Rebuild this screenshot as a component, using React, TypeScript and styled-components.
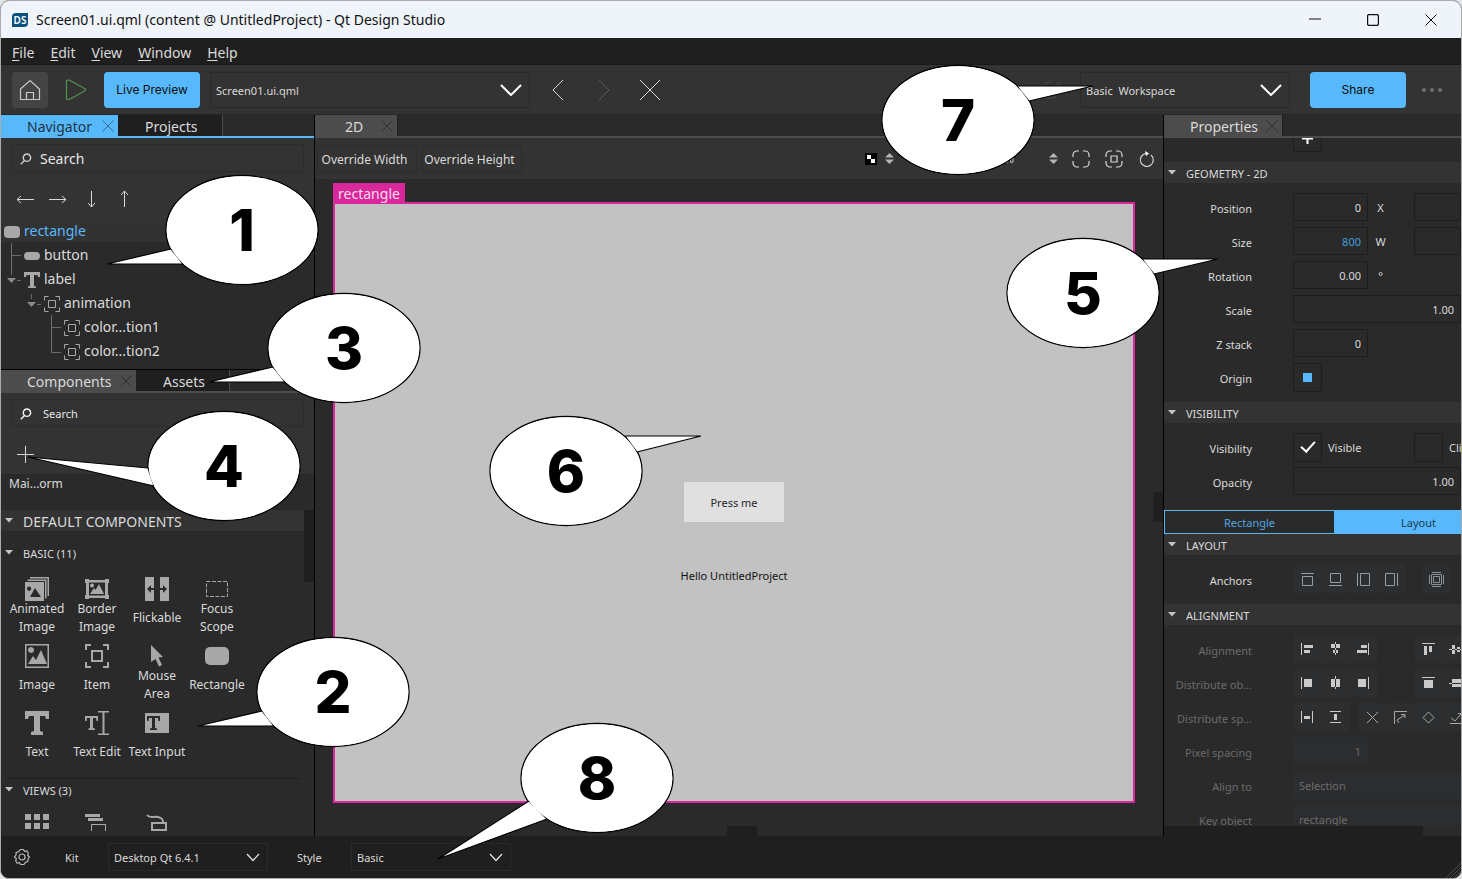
import React from "react";
import styled, { createGlobalStyle, css } from "styled-components";

const c = {
  dark: "#1f1f1f",
  panel: "#2a2a2a",
  bar: "#333333",
  tab: "#4c4c4c",
  line: "#1f1f1f",
  text: "#dadada",
  blue: "#57b9fc",
  icon: "#a8a8a8",
  pink: "#d8289c",
};

const Global = createGlobalStyle`
  * { box-sizing: border-box; }
  body { margin: 0; background: #e4e4e4; font-family: "Noto Sans", "Open Sans", sans-serif; color: ${c.text}; }
  button, input, select { font: inherit; color: inherit; margin: 0; padding: 0; border: 0; background: none; border-radius: 0; outline: 0; }
`;

const Shell = styled.div`
  position: relative;
  display: flex;
  flex-direction: column;
  height: 100vh;
  border: 1px solid #a9abad;
  border-radius: 9px;
  overflow: hidden;
  background: ${c.panel};
  font-size: 11px;
`;

/* ---------- title, menu ---------- */
const TitleBar = styled.header`
  display: flex;
  align-items: center;
  flex: 0 0 37px;
  padding: 0 1px 0 11px;
  background: #eff4fa;
  color: #111;
  font-size: 14px;
`;
const Logo = styled.span`
  width: 16px;
  height: 14px;
  margin-right: 8px;
  border-radius: 4px 0 4px 0;
  background: #0b4f80;
  color: #fff;
  font-size: 10px;
  font-weight: 600;
  line-height: 14px;
  text-align: center;
`;
const WindowButtons = styled.div`
  display: flex;
  margin-left: auto;
`;
const WindowButton = styled.button`
  display: grid;
  place-items: center;
  width: 58px;
  height: 36px;
`;
const MenuBar = styled.nav`
  display: flex;
  align-items: center;
  gap: 16px;
  flex: 0 0 27px;
  padding: 3px 12px 0 11px;
  background: ${c.dark};
  border-bottom: 1px solid #191919;
  font-size: 14px;
`;
const MenuButton = styled.button`
  line-height: 20px;
  &::first-letter { text-decoration: underline; text-underline-offset: 2px; }
`;

/* ---------- main toolbar ---------- */
const Toolbar = styled.div`
  display: flex;
  align-items: center;
  flex: 0 0 50px;
  padding: 0 16px 0 11px;
  background: ${c.bar};
  border-bottom: 1px solid #262626;
`;
const ToolButton = styled.button<{ $filled?: boolean; $w?: number }>`
  display: grid;
  place-items: center;
  width: ${(p) => p.$w ?? 36}px;
  height: 36px;
  border-radius: 4px;
  background: ${(p) => (p.$filled ? "#444444" : "none")};
`;
const PrimaryButton = styled.button`
  width: 96px;
  height: 36px;
  border-radius: 4px;
  background: ${c.blue};
  color: #0c0c0c;
  font-family: Inter, sans-serif;
  font-size: 12px;
  font-weight: 400;
`;
const SelectBox = styled.span<{ $w: number; $h: number }>`
  position: relative;
  display: flex;
  align-items: center;
  width: ${(p) => p.$w}px;
  height: ${(p) => p.$h}px;
  border: 1px solid #2a2a2a;
  select {
    width: 100%;
    height: 100%;
    padding: 1px 0 0 5px;
    appearance: none;
    white-space: pre;
  }
  svg { position: absolute; right: 7px; pointer-events: none; }
`;
const Spacer = styled.span<{ $w?: number }>`
  ${(p) => (p.$w ? css`width: ${p.$w}px;` : css`flex: 1;`)}
`;

/* ---------- docks ---------- */
const Body = styled.div`
  display: flex;
  flex: 1;
  min-height: 0;
`;
const SideDock = styled.aside<{ $w: number }>`
  display: flex;
  flex-direction: column;
  flex: 0 0 ${(p) => p.$w}px;
  min-width: 0;
  overflow: hidden;
`;
const CenterDock = styled.main`
  display: flex;
  flex-direction: column;
  flex: 1;
  min-width: 0;
  border-left: 1px solid #000;
  border-right: 1px solid #000;
`;
const TabStrip = styled.div<{ $accent?: boolean }>`
  display: flex;
  flex: 0 0 23px;
  border-bottom: 2px solid ${(p) => (p.$accent ? c.blue : c.tab)};
`;
const TabItem = styled.div<{ $kind: "accent" | "active" | "idle"; $w: number; $pad: number }>`
  display: flex;
  align-items: center;
  width: ${(p) => p.$w}px;
  padding: 0 4px 0 ${(p) => p.$pad}px;
  border-right: 1px solid ${(p) => (p.$kind === "idle" ? c.tab : c.dark)};
  background: ${(p) => (p.$kind === "accent" ? c.blue : p.$kind === "active" ? c.tab : c.dark)};
  color: ${(p) => (p.$kind === "accent" ? "#22313d" : c.text)};
  font-size: 14px;
`;
const TabLabel = styled.button`
  flex: 1;
  padding-top: 2px;
  text-align: left;
  white-space: nowrap;
  line-height: 18px;
`;
const TabClose = styled.button`
  display: grid;
  color: #2e2e2e;
`;
const DockHeader = styled.div<{ $h: number }>`
  flex: 0 0 ${(p) => p.$h}px;
  padding: 6px 10px 0;
  background: ${c.bar};
`;
const SearchBox = styled.label<{ $large?: boolean }>`
  display: flex;
  align-items: center;
  gap: ${(p) => (p.$large ? 8 : 11)}px;
  height: 28px;
  padding: 1px 0 0 8px;
  border: 1px solid #2c2c2c;
  border-radius: 3px;
  font-size: ${(p) => (p.$large ? 14 : 11)}px;
  input { flex: 1; min-width: 0; color: #e6e6e6; }
  input::placeholder { color: #e6e6e6; opacity: 1; }
`;
const ArrowRow = styled.div`
  display: flex;
  gap: 9px;
  padding: 15px 2px 0;
`;
const SmallButton = styled.button`
  display: grid;
  place-items: center;
  width: 24px;
  height: 24px;
`;

/* ---------- navigator tree ---------- */
const Tree = styled.ul`
  flex: 0 0 150px;
  margin: 0;
  padding: 0;
  list-style: none;
  border-bottom: 1px solid #000;
  font-size: 14px;
`;
const TreeRow = styled.li<{ $selected?: boolean; $depth: number }>`
  display: flex;
  align-items: center;
  height: 24px;
  padding-left: ${(p) => p.$depth * 20}px;
  background: ${(p) => (p.$selected ? "#323232" : "none")};
  color: ${(p) => (p.$selected ? c.blue : c.text)};
  &:first-child { height: 22px; margin-bottom: 1px; }
  svg { flex: none; }
`;
const TreeText = styled.span`
  margin-left: 1px;
  line-height: 20px;
`;

/* ---------- component library ---------- */
const Library = styled.div`
  display: flex;
  flex-direction: column;
  flex: 1;
  min-height: 0;
  overflow: hidden;
`;
const ModuleRow = styled.div`
  flex: 0 0 36px;
  padding-left: 8px;
  font-size: 12px;
  line-height: 20px;
`;
const LibraryScroll = styled.div`
  display: flex;
  flex: 1;
  min-height: 0;
`;
const LibraryList = styled.div`
  flex: 1;
  min-width: 0;
  overflow: hidden;
`;
const LibraryTrack = styled.div`
  width: 10px;
  &::before { content: ""; display: block; height: 72px; background: ${c.dark}; }
`;
const SectionTitle = styled.h2<{ $filled?: boolean; $big?: boolean; $h?: number }>`
  display: flex;
  align-items: center;
  gap: 9px;
  height: ${(p) => p.$h ?? 21}px;
  margin: 0;
  padding-left: 4px;
  background: ${(p) => (p.$filled ? c.bar : "none")};
  font-size: ${(p) => (p.$big ? 14 : 11)}px;
  font-weight: 400;
  white-space: nowrap;
  span { padding-top: 2px; }
`;
const Grid = styled.div<{ $top: number }>`
  display: grid;
  grid-template-columns: repeat(4, 60px);
  row-gap: 10px;
  padding: ${(p) => p.$top}px 6px 10px;
`;
const GridCell = styled.button`
  display: flex;
  flex-direction: column;
  align-items: center;
  font-size: 12px;
  line-height: 18px;
`;
const GridLabel = styled.span`
  display: flex;
  align-items: center;
  height: 33px;
  width: 60px;
  justify-content: center;
  span { white-space: pre; }
`;
const Rule = styled.hr`
  margin: 0 4px 0 5px;
  border: 0;
  border-top: 1px solid ${c.line};
`;

/* ---------- 2D view ---------- */
const ViewBar = styled.div`
  display: flex;
  align-items: center;
  flex: 0 0 41px;
  padding: 0 4px 0 2px;
  background: ${c.bar};
`;
const OverrideButton = styled.button`
  width: 100px;
  height: 28px;
  margin-right: 5px;
  padding: 1px 5px 0 0;
  border: 1px solid #2c2c2c;
  border-radius: 3px;
  font-size: 12px;
  white-space: nowrap;
`;
const Zoom = styled.span`
  width: 102px;
  text-align: right;
  font-size: 12px;
`;
const Stage = styled.div`
  position: relative;
  flex: 1;
  min-height: 0;
  overflow: hidden;
  padding: 4px 0 0 18px;
`;
const ArtboardName = styled.div`
  width: 72px;
  height: 19px;
  background: ${c.pink};
  color: #f4dcec;
  font-size: 14px;
  line-height: 22px;
  text-align: center;
`;
const Artboard = styled.div`
  display: flex;
  flex-direction: column;
  align-items: center;
  width: 802px;
  height: 601px;
  padding-top: 278px;
  border: 2px solid ${c.pink};
  background: #c2c2c2;
  color: #111;
`;
const PressButton = styled.button`
  width: 100px;
  height: 40px;
  margin-bottom: 46px;
  background: #e0e0e0;
  color: #26282a;
`;
const ThumbV = styled.div`
  position: absolute;
  right: 0;
  top: 313px;
  width: 10px;
  height: 30px;
  background: ${c.dark};
`;
const ThumbH = styled.div`
  position: absolute;
  left: 412px;
  bottom: 0;
  width: 30px;
  height: 10px;
  background: ${c.dark};
`;

/* ---------- properties ---------- */
const Props = styled.div`
  flex: 1;
  min-height: 0;
  overflow: hidden;
`;
const Rows = styled.div<{ $bottom: number; $top?: number }>`
  display: grid;
  grid-template-columns: minmax(0, 1fr);
  row-gap: 6px;
  padding: ${(p) => p.$top ?? 10}px 0 ${(p) => p.$bottom}px;
`;
const Row = styled.div<{ $dim?: boolean }>`
  display: flex;
  align-items: center;
  height: 28px;
  color: ${(p) => (p.$dim ? "#6b6b6b" : c.text)};
`;
const RowLabel = styled.label`
  width: 88px;
  flex: none;
  margin-right: 41px;
  padding-top: 2px;
  text-align: right;
  white-space: nowrap;
`;
const Pair = styled.div`
  display: flex;
  flex: none;
  align-items: center;
  width: 121px;
`;
const Field = styled.input<{ $fill?: boolean; $blue?: boolean; $dim?: boolean; $left?: boolean }>`
  ${(p) => (p.$fill ? css`flex: 1; min-width: 0; border-right-width: 0 !important;` : css`width: 75px; flex: none;`)}
  height: 28px;
  padding: 1px 6px 0 5px !important;
  border: 1px solid ${(p) => (p.$dim ? "#2a2d30" : "#1d1d1d")} !important;
  background: ${(p) => (p.$dim ? "#2c2d2f" : "none")} !important;
  color: ${(p) => (p.$blue ? "#3f9cd8" : "inherit")} !important;
  text-align: ${(p) => (p.$left ? "left" : "right")};
`;
const Unit = styled.span`
  width: 25px;
  padding-top: 1px;
  text-align: center;
`;
const CheckBox = styled.input`
  appearance: none;
  display: grid;
  flex: none;
  place-items: center;
  width: 29px;
  height: 29px;
  border: 1px solid #1d1d1d !important;
  &:checked::before {
    content: "";
    width: 12px;
    height: 6px;
    margin-top: -4px;
    border: solid #fff;
    border-width: 0 0 2px 2px;
    transform: rotate(-48deg);
  }
`;
const CheckLabel = styled.label`
  margin-left: 6px;
  padding-top: 1px;
  white-space: nowrap;
`;
const OriginButton = styled.button`
  display: grid;
  place-items: center;
  width: 29px;
  height: 29px;
  border: 1px solid #1d1d1d !important;
  &::before { content: ""; width: 9px; height: 9px; background: ${c.blue}; }
`;
const ClippedRow = styled.div`
  display: flex;
  align-items: flex-end;
  height: 14px;
  margin-bottom: 10px;
  padding-left: 129px;
  overflow: hidden;
`;
const AddButton = styled.button`
  display: grid;
  place-items: center;
  flex: none;
  width: 29px;
  height: 28px;
  border: 1px solid #1d1d1d !important;
`;
const Segments = styled.div`
  display: flex;
  height: 24px;
  border: 1px solid ${c.blue};
  border-right: 0;
`;
const Segment = styled.button<{ $on?: boolean }>`
  flex: none;
  width: 169px;
  background: ${(p) => (p.$on ? c.blue : "none")};
  color: ${(p) => (p.$on ? "#1d3a50" : "#4ea6e2")};
`;
const IconGroup = styled.div<{ $gap?: number }>`
  display: flex;
  flex: none;
  gap: 1px;
  margin-left: ${(p) => p.$gap ?? 1}px;
`;
const IconButton = styled.button`
  display: grid;
  flex: none;
  place-items: center;
  width: 27px;
  height: 28px;
  background: #2c2e30;
`;
const HScroll = styled.div`
  flex: 0 0 10px;
  &::before { content: ""; display: block; width: 259px; height: 10px; background: ${c.dark}; }
`;

/* ---------- status bar ---------- */
const StatusBar = styled.footer`
  display: flex;
  align-items: center;
  flex: 0 0 42px;
  padding-left: 12px;
  background: ${c.dark};
  svg { flex: none; }
`;
const StatusLabel = styled.label<{ $w: number }>`
  width: ${(p) => p.$w}px;
  padding-top: 1px;
`;
const Grip = styled.span`
  align-self: flex-end;
  margin-left: auto;
  display: flex;
`;

/* ---------- callouts ---------- */
const Bubble = styled.div<{ $x: number; $y: number }>`
  position: absolute;
  left: ${(p) => p.$x - 77}px;
  top: ${(p) => p.$y - 56}px;
  display: grid;
  place-items: center;
  width: 152px;
  height: 110px;
  pointer-events: none;
  svg { position: absolute; inset: 0; overflow: visible; }
`;
const BubbleNumber = styled.strong`
  position: relative;
  color: #000;
  font-family: Inter, sans-serif;
  font-size: 58px;
  font-weight: 800;
  line-height: 60px;
`;

type Pt = [number, number];
const callouts: { n: number; x: number; y: number; tip: Pt; a: Pt; b: Pt }[] = [
  { n: 1, x: 242, y: 230, tip: [107, 264], a: [171, 249], b: [183, 264] },
  { n: 2, x: 333, y: 692, tip: [198, 726], a: [262, 711], b: [274, 726] },
  { n: 3, x: 344, y: 348, tip: [209, 382], a: [273, 367], b: [285, 382] },
  { n: 4, x: 224, y: 466, tip: [28, 457], a: [148, 468], b: [154, 486] },
  { n: 5, x: 1083, y: 293, tip: [1218, 259], a: [1142, 259], b: [1154, 274] },
  { n: 6, x: 566, y: 471, tip: [701, 436], a: [625, 436], b: [637, 452] },
  { n: 7, x: 958, y: 120, tip: [1093, 86], a: [1017, 86], b: [1029, 101] },
  { n: 8, x: 597, y: 778, tip: [438, 859], a: [529, 801], b: [547, 819] },
];

function Callout({ n, x, y, tip, a, b }: (typeof callouts)[number]) {
  const local = ([px, py]: Pt) => `${px - x + 76},${py - y + 55}`;
  return (
    <Bubble $x={x} $y={y}>
      <svg width="152" height="110">
        <ellipse cx="76" cy="55" rx="76" ry="54.5" fill="#fff" stroke="#000" strokeWidth="1.3" />
        <polygon points={`${local(a)} ${local(tip)} ${local(b)}`} fill="#fff" stroke="#000" strokeWidth="1.2" strokeLinejoin="bevel" />
        <ellipse cx="76" cy="55" rx="75.3" ry="53.8" fill="#fff" />
      </svg>
      <BubbleNumber>{n}</BubbleNumber>
    </Bubble>
  );
}

/* ---------- icons ---------- */
function Line({ w, h = w, d, color = "#d8d8d8", sw = 1, dash }: { w: number; h?: number; d: string; color?: string; sw?: number; dash?: string }) {
  return (
    <svg width={w} height={h} viewBox={`0 0 ${w} ${h}`} fill="none" stroke={color} strokeWidth={sw} strokeDasharray={dash}>
      <path d={d} />
    </svg>
  );
}
function Solid({ w, h = w, d, color = c.icon }: { w: number; h?: number; d: string; color?: string }) {
  return (
    <svg width={w} height={h} viewBox={`0 0 ${w} ${h}`} fill={color} fillRule="evenodd">
      <path d={d} />
    </svg>
  );
}
const Triangle = () => <Solid w={9} h={5} d="M0 0H8L4 4.500Z" color="#c4c4c4" />;
const Chevron = () => <Line w={22} h={12} d="M1 1L11 11L21 1" color="#fff" sw={2} />;
const ChevronSmall = () => <Line w={14} h={9} d="M1 1L7 7.500L13 1" color="#e0e0e0" sw={1.3} />;
const Cross = ({ color }: { color: string }) => <Line w={12} d="M.5 .5L11.500 11.500M11.500 .5L.5 11.500" color={color} />;
const Lens = ({ color }: { color: string }) => (
  <Line w={12} d="M7 1A3.700 3.700 0 1 1 6.900 1M4.500 7.500L.8 11.200" color={color} sw={1.3} />
);
const Spin = () => <Solid w={9} h={11} d="M0 4.500L4.500 0L9 4.500ZM0 6.500L4.500 11L9 6.500Z" color="#b4b4b4" />;

const treeItem = "M1 5V1H5M12 1H16V5M16 12V16H12M5 16H1V12M5 5H12V12H5Z";
const textT = "M0 0H24V8H21L20 5H15V20L18 21V24H6V21L9 20V5H4L3 8H0Z";

function TreeGlyph({ kind }: { kind: string }) {
  if (kind === "rect") return <svg width="22" height="16"><rect x="3" y="3" width="16" height="12" rx="4" fill={c.icon} /></svg>;
  if (kind === "button")
    return (
      <svg width="42" height="24" fill="none" stroke="#6c6c6c">
        <path d="M10.500 0V24M10.500 12.500H20" />
        <rect x="23" y="9" width="16" height="8" rx="4" fill={c.icon} stroke="none" />
      </svg>
    );
  if (kind === "label")
    return (
      <svg width="42" height="24" fill="none" stroke="#8a8a8a">
        <path d="M10.500 0V8M16 13.500H20" stroke="#6c6c6c" />
        <path d="M6 11H15L10.500 16Z" fill="#8a8a8a" stroke="none" />
        <path d="M23 5H39V10H37L36.500 8H33V19L35 19.500V21H27V19.500L29 19V8H25.500L25 10H23Z" fill={c.icon} stroke="none" />
      </svg>
    );
  if (kind === "anim")
    return (
      <svg width="42" height="24" fill="none" stroke={c.icon}>
        <path d="M10.500 3V8M16 13.500H20" stroke="#6c6c6c" />
        <path d="M6 11H15L10.500 16Z" fill="#8a8a8a" stroke="none" />
        <path transform="translate(22.500 4.500)" d={treeItem} />
      </svg>
    );
  return (
    <svg width="42" height="24" fill="none" stroke={c.icon}>
      <path d={kind === "last" ? "M10.500 0V13.500H20" : "M10.500 0V24M10.500 12.500H20"} stroke="#6c6c6c" />
      <path transform="translate(22.500 4.500)" d={treeItem} />
    </svg>
  );
}

const tree = [
  { kind: "rect", text: "rectangle", depth: 0 },
  { kind: "button", text: "button", depth: 0 },
  { kind: "label", text: "label", depth: 0 },
  { kind: "anim", text: "animation", depth: 1 },
  { kind: "mid", text: "color...tion1", depth: 2 },
  { kind: "last", text: "color...tion2", depth: 2 },
];

const components: [string, React.ReactNode][] = [
  ["Animated\nImage", <Solid w={24} d="M5 0H24V19H22.500V1.500H5ZM2.500 2.500H21.500V21.500H20V4H2.500ZM0 5H19V24H0ZM4 9.500A2.200 2.200 0 1 0 4.100 9.500M5 20L10 11L16 20Z" />],
  ["Border\nImage", <Solid w={24} d="M0 2H4V3H20V2H24V6H23V18H24V22H20V21H4V22H0V18H1V6H0ZM4 5.500V18.500H20V5.500ZM5 17L9 11L10.500 13L14 7L19 17ZM7 6.500A2 2 0 1 0 7.100 6.500" />],
  ["Flickable", <Solid w={24} d="M0 0H9V24H0ZM15 0H24V24H15ZM2 12L6 8V11H9V13H6V16ZM22 12L18 8V11H15V13H18V16Z" />],
  ["Focus\nScope", <Line w={24} d="M1.500 4.500H22.500V19.500H1.500Z" color={c.icon} dash="4 1.500" />],
  ["Image", <Solid w={24} d="M0 0H24V24H0ZM1.500 1.500V22.500H22.500V1.500ZM3 20L8 12L11 16L16 6L22 20ZM6 3A3 3 0 1 0 6.100 3" />],
  ["Item", <Line w={24} d="M1 6V1H6M18 1H23V6M23 18V23H18M6 23H1V18M7 7H17V17H7Z" color={c.icon} sw={2} />],
  ["Mouse\nArea", <Solid w={24} d="M6 1L18 13L13.500 13.500L17 21L14 22.500L10.500 15L6 18Z" />],
  ["Rectangle", <Solid w={24} d="M5 3H19A5 5 0 0 1 24 8V16A5 5 0 0 1 19 21H5A5 5 0 0 1 0 16V8A5 5 0 0 1 5 3Z" />],
  ["Text", <Solid w={24} d={textT} />],
  ["Text Edit", <Solid w={24} d="M0 5H13V10H11.500L11 7H8V17L10 17.500V19H3.500V17.500L5 17V7H2L1.500 10H0ZM13 0H24V1.500H19.500V22.500H24V24H13V22.500H17.500V1.500H13Z" />],
  ["Text Input", <Solid w={24} d="M0 2H24V22H0ZM2 5V10H3.500L4 7H7V17L5 17.500V19H12V17.500L10 17V7H13L13.500 10H15V5Z" />],
];
const views = [
  <Solid w={24} d="M0 4H6V10H0ZM9 4H15V10H9ZM18 4H24V10H18ZM0 13H6V19H0ZM9 13H15V19H9ZM18 13H24V19H18Z" />,
  <Solid w={24} d="M0 4H15V7H0ZM3 8H18V11H3ZM6 14H21V21H20V15H7V21H6Z" />,
  <Line w={24} d="M2 5C5 9 8 6 13 7C17 8 18 9 18 12M7 13H21V20H7Z" color={c.icon} sw={2} />,
];

const anchors = [
  "M1 1.500H14M2.500 4.500H12.500V13.500H2.500Z",
  "M1 13.500H14M2.500 1.500H12.500V10.500H2.500Z",
  "M1.500 1V14M4.500 1.500H13.500V13.500H4.500Z",
  "M13.500 1V14M1.500 1.500H10.500V13.500H1.500Z",
];
const light = "#c9c9c9";
const alignH = ["M1 1H2V13H1ZM4 3H13V6H4ZM4 8H10V11H4Z", "M7 0H8V13H7ZM3 2H12V6H3ZM5 8H10V11H5Z", "M12 1H13V13H12ZM5 3H11V6H5ZM1 8H11V11H1Z"];
const alignV = ["M1 1H14V2H1ZM3 4H6V13H3ZM8 4H11V10H8Z", "M0 7H14V8H0ZM3 3H6V12H3ZM8 5H11V10H8Z"];
const distH = ["M1 1H2V13H1ZM4 3H12V11H4Z", "M7 0H8V13H7ZM3 3H12V11H3Z", "M12 1H13V13H12ZM2 3H10V11H2Z"];
const distV = ["M1 1H14V2H1ZM3 4H12V12H3Z", "M0 7H14V8H0ZM3 3H12V11H3Z"];
const spacing = ["M1 1H2V13H1ZM12 1H13V13H12ZM4 6H10V9H4Z", "M2 1H13V2H2ZM2 12H13V13H2ZM6 4H9V10H6Z"];
const origins = ["M2 2L13 13M13 2L2 13", "M1.500 14V1.500H14M6 13L4 10L12 5M8 4.500H12V8", "M7.500 2L13 7.500L7.500 13L2 7.500Z", "M1 13.500H14M2 8L6 11L12 4M9 3.500H12.500V7"];

function Icons({ list, gap }: { list: string[]; gap?: number }) {
  return (
    <IconGroup $gap={gap}>
      {list.map((d) => <IconButton key={d}><Solid w={15} d={d} color={light} /></IconButton>)}
    </IconGroup>
  );
}

function Tab({ label, kind, w, cross, pad = 26 }: { label: string; kind: "accent" | "active" | "idle"; w: number; cross?: string; pad?: number }) {
  return (
    <TabItem $kind={kind} $w={w} $pad={pad}>
      <TabLabel role="tab" aria-selected={kind !== "idle"}>{label}</TabLabel>
      {cross && <TabClose aria-label={`Close ${label}`}><Cross color={cross} /></TabClose>}
    </TabItem>
  );
}

function Section({ title, ...rest }: { title: string; $filled?: boolean; $big?: boolean; $h?: number }) {
  return <SectionTitle {...rest}><Triangle /><span>{title}</span></SectionTitle>;
}

export default function App() {
  return (
    <>
      <Global />
      <Shell>
        <TitleBar>
          <Logo>DS</Logo>
          Screen01.ui.qml (content @ UntitledProject) - Qt Design Studio
          <WindowButtons>
            <WindowButton aria-label="Minimize"><Line w={12} h={13} d="M0 6H12" color="#111" sw={1.2} /></WindowButton>
            <WindowButton aria-label="Maximize"><Line w={12} d="M1.500 .6H10.500L11.400 1.500V10.500L10.500 11.400H1.500L.6 10.500V1.500Z" color="#111" sw={1.2} /></WindowButton>
            <WindowButton aria-label="Close"><Cross color="#111" /></WindowButton>
          </WindowButtons>
        </TitleBar>
        <MenuBar>
          {["File", "Edit", "View", "Window", "Help"].map((m) => <MenuButton key={m}>{m}</MenuButton>)}
        </MenuBar>

        <Toolbar>
          <ToolButton $filled aria-label="Home">
            <Line w={22} d="M1.500 10L11 1.500L20.500 10V20.500H1.500ZM7.500 20.500V13.500H14.500V20.500" color="#c8c8c8" sw={1.2} />
          </ToolButton>
          <Spacer $w={10} />
          <ToolButton aria-label="Run"><Line w={22} d="M1.500 1.500L4 1L20.500 10V11.500L4 20.500L1.500 20Z" color="#4f9150" sw={1.2} /></ToolButton>
          <Spacer $w={10} />
          <PrimaryButton>Live Preview</PrimaryButton>
          <Spacer $w={10} />
          <SelectBox $w={320} $h={36}>
            <select aria-label="Open file"><option>Screen01.ui.qml</option></select>
            <Chevron />
          </SelectBox>
          <Spacer $w={10} />
          <ToolButton aria-label="Back"><Line w={12} h={22} d="M11 1L1 11L11 21" /></ToolButton>
          <Spacer $w={10} />
          <ToolButton aria-label="Forward"><Line w={12} h={22} d="M1 1L11 11L1 21" color="#5a5a5a" /></ToolButton>
          <Spacer $w={10} />
          <ToolButton aria-label="Close file"><Line w={22} d="M1 1L21 21M21 1L1 21" /></ToolButton>
          <Spacer />
          <ToolButton aria-label="Edit workspace"><Line w={18} d="M8 1H4L2 4M1 14L3 17H12L15 9M8 12L17 1" color="#4c4c4c" /></ToolButton>
          <Spacer $w={10} />
          <SelectBox $w={210} $h={36}>
            <select aria-label="Workspace"><option>{"Basic\u00a0 Workspace"}</option></select>
            <Chevron />
          </SelectBox>
          <Spacer $w={20} />
          <PrimaryButton>Share</PrimaryButton>
          <Spacer $w={13} />
          <ToolButton $w={26} aria-label="More">
            <svg width="22" height="6" fill="#707070"><circle cx="3" cy="3" r="2" /><circle cx="11" cy="3" r="2" /><circle cx="19" cy="3" r="2" /></svg>
          </ToolButton>
        </Toolbar>

        <Body>
          <SideDock $w={313}>
            <TabStrip $accent>
              <Tab label="Navigator" kind="accent" w={118} cross="#35698f" />
              <Tab label="Projects" kind="idle" w={104} />
            </TabStrip>
            <DockHeader $h={82}>
              <SearchBox $large><Lens color="#d0d0d0" /><input aria-label="Search navigator" placeholder="Search" /></SearchBox>
              <ArrowRow>
                <SmallButton aria-label="Left"><Line w={18} h={9} d="M1 4.500H18M5 1L1 4.500L5 8" /></SmallButton>
                <SmallButton aria-label="Right"><Line w={18} h={9} d="M0 4.500H17M13 1L17 4.500L13 8" /></SmallButton>
                <SmallButton aria-label="Down"><Line w={9} h={18} d="M4.500 1V17M1 13L4.500 17L8 13" /></SmallButton>
                <SmallButton aria-label="Up"><Line w={9} h={18} d="M4.500 1V17M1 5L4.500 1L8 5" /></SmallButton>
              </ArrowRow>
            </DockHeader>
            <Tree>
              {tree.map((t) => (
                <TreeRow key={t.text} $depth={t.depth} $selected={t.kind === "rect"}>
                  <TreeGlyph kind={t.kind} /><TreeText>{t.text}</TreeText>
                </TreeRow>
              ))}
            </Tree>
            <Library>
              <TabStrip>
                <Tab label="Components" kind="active" w={136} cross="#303030" />
                <Tab label="Assets" kind="idle" w={93} />
              </TabStrip>
              <DockHeader $h={81}>
                <SearchBox><Lens color="#fff" /><input aria-label="Search components" placeholder="Search" /></SearchBox>
                <ArrowRow><SmallButton aria-label="Add module"><Line w={17} d="M8.500 0V17M0 8.500H17" /></SmallButton></ArrowRow>
              </DockHeader>
              <ModuleRow>Mai...orm</ModuleRow>
              <LibraryScroll>
                <LibraryList>
                  <Section $filled $big title="DEFAULT COMPONENTS" />
                  <Section $h={42} title="BASIC (11)" />
                  <Grid $top={4}>
                    {components.map(([name, icon]) => (
                      <GridCell key={name}>{icon}<GridLabel><span>{name}</span></GridLabel></GridCell>
                    ))}
                  </Grid>
                  <Rule />
                  <Section title="VIEWS (3)" />
                  <Grid $top={10}>{views.map((v, i) => <GridCell key={i} aria-label={`View ${i + 1}`}>{v}</GridCell>)}</Grid>
                </LibraryList>
                <LibraryTrack />
              </LibraryScroll>
            </Library>
          </SideDock>

          <CenterDock>
            <TabStrip><Tab label="2D" kind="active" w={83} cross="#333333" pad={30} /></TabStrip>
            <ViewBar>
              <OverrideButton>Override Width</OverrideButton>
              <OverrideButton>Override Height</OverrideButton>
              <Spacer />
              <svg width="12" height="12"><path d="M0 0H12V12H0Z" fill="#000" /><path d="M2 2H6V6H10V10H6V6H2Z" fill="#fff" /></svg>
              <Spacer $w={8} />
              <Spin />
              <Spacer $w={18} />
              <Zoom>100 %</Zoom>
              <Spacer $w={35} />
              <Spin />
              <Spacer $w={11} />
              <SmallButton aria-label="Fit all"><Line w={18} d="M1 7V5A4 4 0 0 1 5 1H7M11 1H13A4 4 0 0 1 17 5V7M17 11V13A4 4 0 0 1 13 17H11M7 17H5A4 4 0 0 1 1 13V11" sw={1.2} /></SmallButton>
              <Spacer $w={9} />
              <SmallButton aria-label="Fit selection"><Line w={18} d="M1 7V5A4 4 0 0 1 5 1H7M11 1H13A4 4 0 0 1 17 5V7M17 11V13A4 4 0 0 1 13 17H11M7 17H5A4 4 0 0 1 1 13V11M6 6H12V12H6Z" sw={1.2} /></SmallButton>
              <Spacer $w={9} />
              <SmallButton aria-label="Reset view">
                <svg width="18" height="18" fill="none" stroke="#d8d8d8" strokeWidth="1.200"><path d="M13 5A6.500 6.500 0 1 1 8 3.500" /><path d="M7 1L11 3.500L8 6Z" fill="#fff" stroke="none" /></svg>
              </SmallButton>
            </ViewBar>
            <Stage>
              <ArtboardName>rectangle</ArtboardName>
              <Artboard>
                <PressButton>Press me</PressButton>
                Hello UntitledProject
              </Artboard>
              <ThumbV />
              <ThumbH />
            </Stage>
          </CenterDock>

          <SideDock $w={297}>
            <TabStrip><Tab label="Properties" kind="active" w={119} cross="#303030" /></TabStrip>
            <Props>
              <ClippedRow><AddButton aria-label="Add"><Line w={11} d="M5.500 0V11M0 5.500H11" color="#fff" sw={2} /></AddButton></ClippedRow>
              <Section $filled title="GEOMETRY - 2D" />
              <Rows $bottom={11}>
                <Row><RowLabel htmlFor="px">Position</RowLabel><Pair><Field id="px" defaultValue="0" /><Unit>X</Unit></Pair><Field $fill aria-label="Y position" /></Row>
                <Row><RowLabel htmlFor="sw">Size</RowLabel><Pair><Field id="sw" $blue defaultValue="800" /><Unit>W</Unit></Pair><Field $fill aria-label="Height" /></Row>
                <Row><RowLabel htmlFor="rot">Rotation</RowLabel><Field id="rot" defaultValue="0.00" /><Unit>°</Unit></Row>
                <Row><RowLabel htmlFor="scale">Scale</RowLabel><Field id="scale" $fill defaultValue="1.00" /></Row>
                <Row><RowLabel htmlFor="z">Z stack</RowLabel><Field id="z" defaultValue="0" /></Row>
                <Row><RowLabel htmlFor="origin">Origin</RowLabel><OriginButton id="origin" aria-label="Origin" /></Row>
              </Rows>
              <Section $filled title="VISIBILITY" />
              <Rows $bottom={15}>
                <Row>
                  <RowLabel as="span">Visibility</RowLabel>
                  <Pair><CheckBox type="checkbox" id="vis" defaultChecked /><CheckLabel htmlFor="vis">Visible</CheckLabel></Pair>
                  <CheckBox type="checkbox" id="clip" /><CheckLabel htmlFor="clip">Clip</CheckLabel>
                </Row>
                <Row><RowLabel htmlFor="op">Opacity</RowLabel><Field id="op" $fill defaultValue="1.00" /></Row>
              </Rows>
              <Segments><Segment>Rectangle</Segment><Segment $on>Layout</Segment></Segments>
              <Section $filled title="LAYOUT" />
              <Rows $top={10} $bottom={11}>
                <Row>
                  <RowLabel as="span">Anchors</RowLabel>
                  <IconGroup>{anchors.map((d) => <IconButton key={d}><Line w={15} d={d} color="#969ca3" /></IconButton>)}</IconGroup>
                  <IconGroup $gap={18}><IconButton><Line w={15} d="M4.500 4.500H10.500V10.500H4.500ZM2.500 2.500H12.500V12.500H2.500ZM3 .5H12M3 14.500H12M.5 3V12M14.500 3V12" color="#8a8f96" /></IconButton></IconGroup>
                </Row>
              </Rows>
              <Section $filled title="ALIGNMENT" />
              <Rows $top={10} $bottom={0}>
                <Row $dim><RowLabel as="span">Alignment</RowLabel><Pair><Icons list={alignH} /></Pair><Icons list={alignV} /></Row>
                <Row $dim><RowLabel as="span">Distribute ob...</RowLabel><Pair><Icons list={distH} /></Pair><Icons list={distV} /></Row>
                <Row $dim>
                  <RowLabel as="span">Distribute sp...</RowLabel><Icons list={spacing} />
                  <IconGroup $gap={10}>{origins.map((d) => <IconButton key={d}><Line w={15} d={d} color="#a8a8a8" /></IconButton>)}</IconGroup>
                </Row>
                <Row $dim><RowLabel htmlFor="ps">Pixel spacing</RowLabel><Field id="ps" $dim defaultValue="1" /></Row>
                <Row $dim><RowLabel htmlFor="at">Align to</RowLabel><Field id="at" $dim $fill $left defaultValue="Selection" /></Row>
                <Row $dim><RowLabel htmlFor="ko">Key object</RowLabel><Field id="ko" $dim $fill $left defaultValue="rectangle" /></Row>
              </Rows>
            </Props>
            <HScroll />
          </SideDock>
        </Body>

        <StatusBar>
          <svg width="18" height="18" fill="none" stroke="#b8b8b8" strokeWidth="1.200">
            <path d="M7.500 1.500H10.500L11.500 3.300L14 3L15.300 5.300L14.600 7.300L16.500 9L15 11L14.800 13.500L12.500 14.300L11 16.500H7.500L6.500 14.700L4 15L2.700 12.700L3.400 10.700L1.500 9L3 7L3.200 4.500L5.500 3.700Z" />
            <circle cx="9" cy="9" r="3" />
          </svg>
          <Spacer $w={34} />
          <StatusLabel $w={43} htmlFor="kit">Kit</StatusLabel>
          <SelectBox $w={160} $h={28}><select id="kit"><option>Desktop Qt 6.4.1</option></select><ChevronSmall /></SelectBox>
          <Spacer $w={29} />
          <StatusLabel $w={54} htmlFor="style">Style</StatusLabel>
          <SelectBox $w={160} $h={28}><select id="style"><option>Basic</option></select><ChevronSmall /></SelectBox>
          <Grip><Line w={16} d="M16 1L1 16M16 5L5 16M16 9L9 16" color="#4a4a4a" /></Grip>
        </StatusBar>
        {callouts.map((k) => <Callout key={k.n} {...k} />)}
      </Shell>
    </>
  );
}
